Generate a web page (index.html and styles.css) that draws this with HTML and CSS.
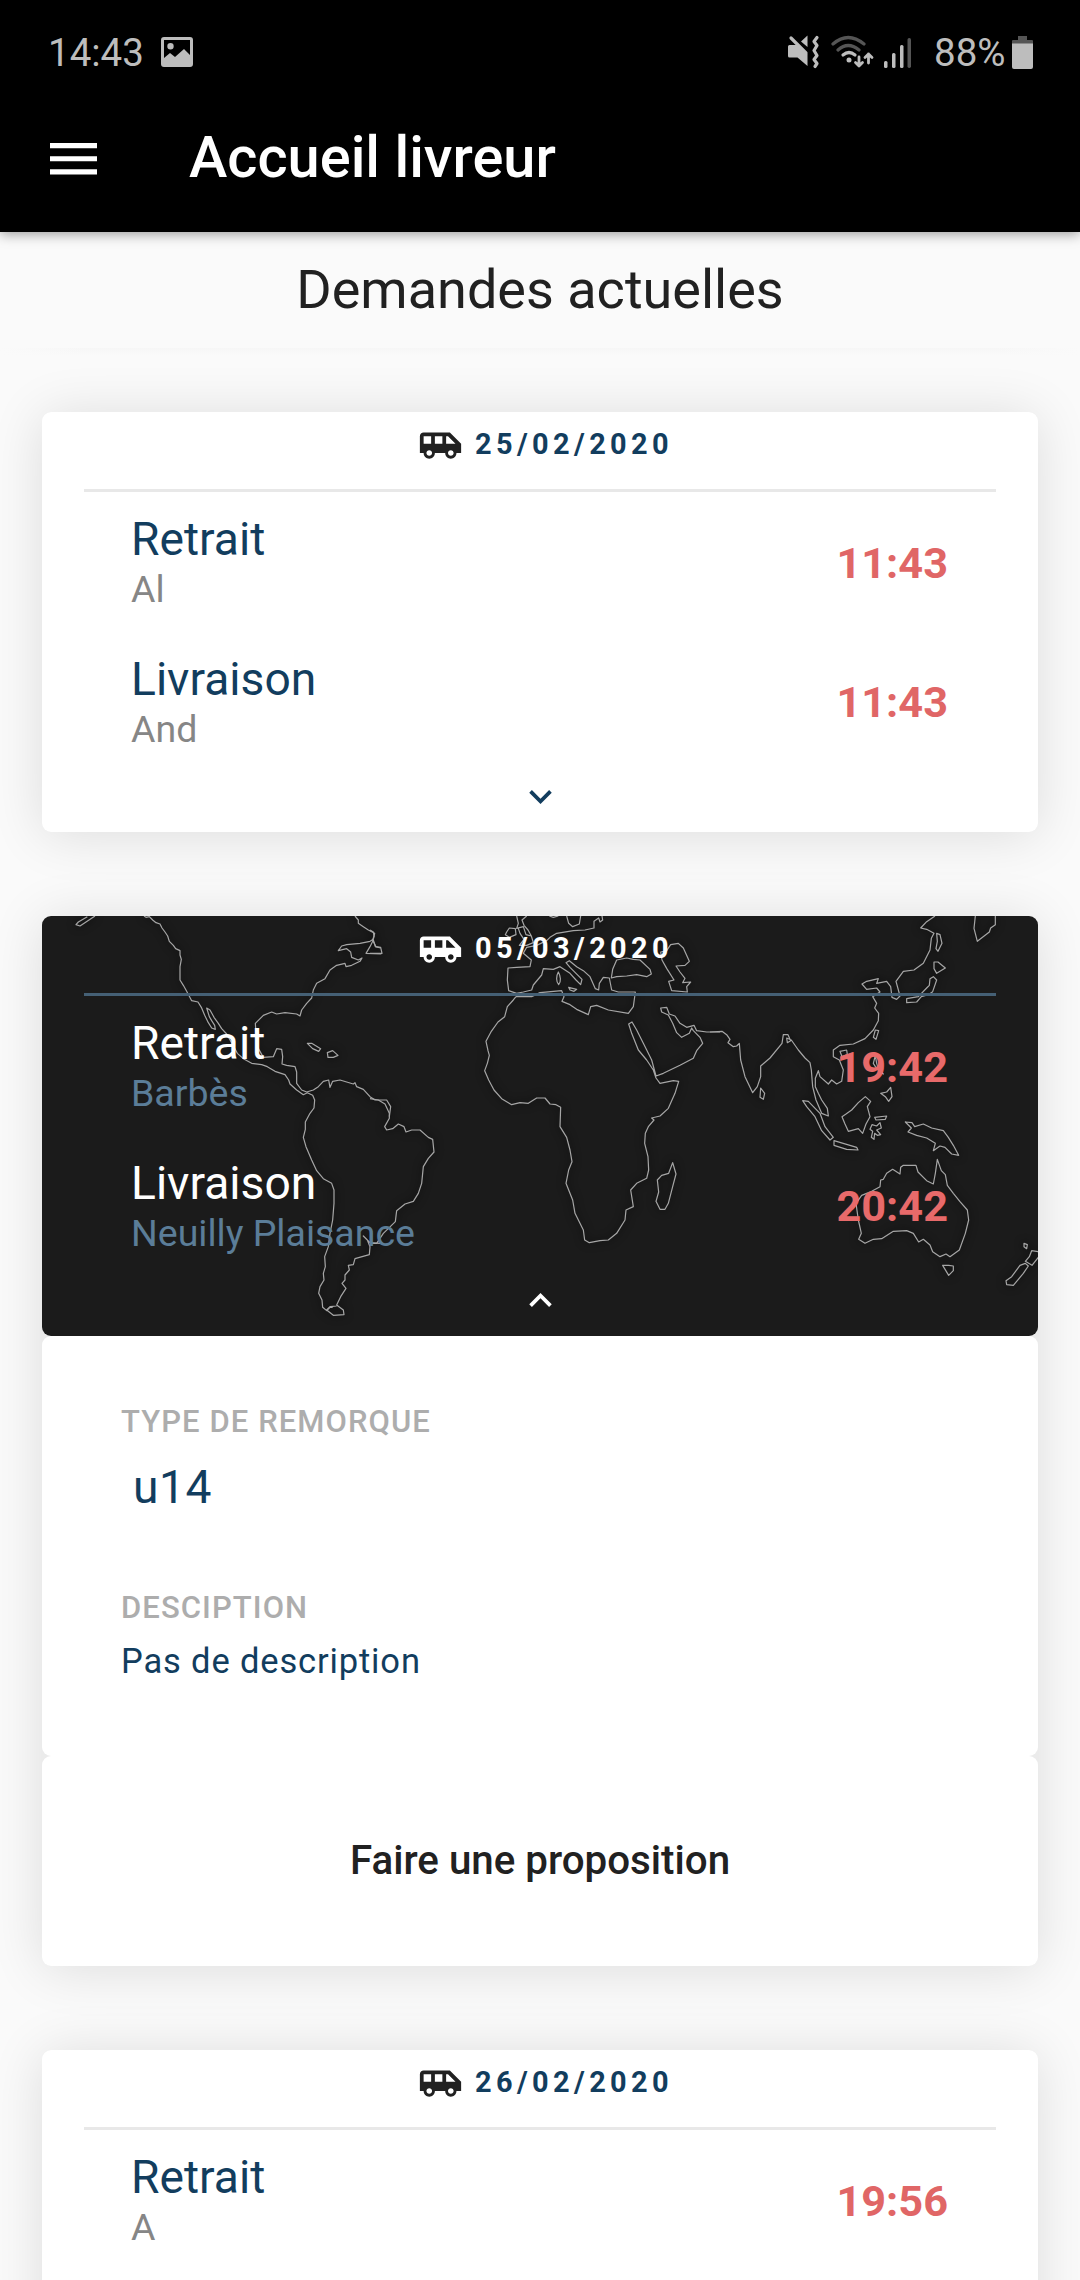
FILE: index.html
```html
<!DOCTYPE html>
<html lang="fr">
<head>
<meta charset="utf-8">
<title>Accueil livreur</title>
<link rel="stylesheet" href="styles.css">
</head>
<body>
<svg class="defs" aria-hidden="true">
  <symbol id="van" viewBox="0 0 24 24"><path d="M17 5H3c-1.1 0-2 .89-2 2v9h2c0 1.65 1.34 3 3 3s3-1.34 3-3h5.5c0 1.65 1.34 3 3 3s3-1.34 3-3H23v-5l-6-6zM3 11V7h4v4H3zm3 6.5c-.83 0-1.5-.67-1.5-1.5s.67-1.5 1.5-1.5 1.5.67 1.5 1.5-.67 1.5-1.5 1.5zm7-6.5H9V7h4v4zm4.5 6.5c-.83 0-1.5-.67-1.5-1.5s.67-1.5 1.5-1.5 1.5.67 1.5 1.5-.67 1.5-1.5 1.5zM15 11V7h1l4 4h-5z"/></symbol>
  <symbol id="more" viewBox="0 0 24 24"><path d="M16.59 8.59L12 13.17 7.41 8.59 6 10l6 6 6-6z"/></symbol>
  <symbol id="less" viewBox="0 0 24 24"><path d="M12 8l-6 6 1.41 1.41L12 10.83l4.59 4.58L18 14z"/></symbol>
</svg>
<header class="top">
  <div class="status">
    <span class="clock">14:43</span>
    <svg class="pic" viewBox="0 0 32 30"><path fill-rule="evenodd" d="M3 0h26a3 3 0 0 1 3 3v24a3 3 0 0 1-3 3H3a3 3 0 0 1-3-3V3a3 3 0 0 1 3-3zM3 3v18l6-5 5 4 9-8 6 6V3zM9.500 6a3.200 3.200 0 1 1 0 6.400a3.200 3.200 0 0 1 0-6.400z"/></svg>
    <svg class="signals" viewBox="0 0 126 34">
      <path d="M1.500 10H9l10.500 9v12L9.500 22.500h-8Q0 22.500 0 21v-9.500Q0 10 1.500 10zM13 6.500L19.500.5V12z"/>
      <path class="line" d="M3 3L18 18M29 2.500l-3 4 3 4-3 5 3 5-3 4 3 4-2 3"/>
      <g class="dim"><path class="line" d="M45 9q15-13 31 0M50 15q10-9 21 0"/><rect x="119.500" y="3" width="3.500" height="30" rx="1.700"/></g>
      <path class="line" d="M55 20q6-5 12 0"/><circle cx="61" cy="25" r="2.500"/>
      <path class="line thin" d="M71 22v9M67.500 27.500l3.500 3.500 3.500-3.500M80.500 28v-9M77 22.500l3.500-3.500 3.500 3.500"/>
      <rect x="96" y="26" width="3.500" height="7" rx="1.500"/><rect x="104" y="18" width="3.500" height="15" rx="1.500"/><rect x="112" y="10" width="3.500" height="23" rx="1.500"/>
    </svg>
    <span class="level">88%</span>
    <svg class="battery" viewBox="0 0 21 33"><path class="dim" d="M6 0h9v4h5q1 0 1 1v4H0V5q0-1 1-1h5z"/><path d="M0 7.500h21V31a2 2 0 0 1-2 2H2a2 2 0 0 1-2-2z"/></svg>
  </div>
  <div class="appbar">
    <svg class="menu" viewBox="3 6 18 12"><path d="M3 18h18v-2H3v2zm0-5h18v-2H3v2zm0-7v2h18V6H3z"/></svg>
    <h1>Accueil livreur</h1>
  </div>
</header>
<h2 class="heading">Demandes actuelles</h2>
<main class="list">
  <section class="request">
    <article class="card">
      <div class="date"><svg><use href="#van"/></svg><span>25/02/2020</span></div>
      <div class="stops">
        <div class="stop"><div><p class="kind">Retrait</p><p class="place">Al</p></div><time>11:43</time></div>
        <div class="stop"><div><p class="kind">Livraison</p><p class="place">And</p></div><time>11:43</time></div>
      </div>
      <svg class="chevron"><use href="#more"/></svg>
    </article>
  </section>
  <section class="request">
    <article class="card dark">
      <svg class="map" viewBox="0 0 996 420">
        <g transform="translate(-12 -16) scale(.33333)">
          <path d="M195 48L150 78 138 74 145 66 172 50"/>
          <path d="M342 48L348 52 358 50 368 60 378 68 390 72 396 84 405 96 413 108 418 124 430 136 437 146 450 152 450 165 454 178 450 200 450 240 460 256 470 274 485 302 504 306 514 322 524 346 535 368 545 384 556 388 554 376 545 362 538 350 530 324 540 330 552 352 565 370 575 386 590 402 606 430 622 460 640 476 665 490 695 494 712 500 735 514 765 524 776 540 780 552 800 570 820 584 832 578 848 586 854 600 852 624 840 640 826 666 826 688 820 712 828 740 845 780 860 812 880 836 905 850 912 870 912 910 908 960 900 1000 895 1040 884 1070 886 1100 880 1120 882 1140 870 1160 866 1180 876 1200 878 1222 890 1232 900 1222 908 1222"/>
          <path d="M975 48L985 60 985 70 1000 80 1015 90 1034 100 1030 118 1020 124 990 130 950 134 935 138 925 152 950 146 962 156 965 172 985 180 996 174 990 184 965 196 948 200 945 190 920 196 900 210 885 236 860 250 850 270 845 294 830 310 815 330 810 348 800 342 765 338 740 342 725 336 700 346 676 370 678 400 682 440 700 472 730 470 740 446 755 448 758 470 756 492 770 496 795 500 800 516 800 550 815 570 830 576 850 570 865 560 880 544 896 540 900 562 908 544 930 540 970 552 975 548 980 560 1000 568 1020 590 1035 600 1050 600 1070 600 1082 620 1078 650"/>
          <path d="M1030 120L1036 140 1052 144M1030 120L1020 140 1008 160 1054 162"/>
          <path d="M832 430L845 430 872 446 866 454 848 446ZM892 458L908 452 924 466 910 472 894 472Z"/>
          <path d="M1050 1030L1020 1028 1000 1008 1012 1020 1020 1040 1018 1064 975 1076 970 1094 955 1096 958 1110 945 1125 945 1140 936 1150 948 1165 932 1190 920 1215 940 1230 942 1244 910 1246 890 1230 900 1220 920 1218"/>
        </g>
        <g transform="translate(328 -16) scale(.33333)">
          <path d="M0 90L10 96 12 108 8 120 18 140 32 142 36 160 0 160"/>
          <path d="M0 596L25 600 45 612 58 640 58 655 44 680 50 690 68 686 85 672 102 680 108 696 125 690 150 690 175 712 188 718 192 756 175 775 160 800 155 850 145 880 130 904 105 912 80 932 76 965 40 1000 20 1030 0 1030"/>
          <path d="M438 290L430 300 412 320 404 350 384 366 364 394 348 424 354 452 358 466 352 490 344 512 356 540 372 570 395 596 425 614 450 608 475 610 500 594 525 594 540 612 558 614 572 622 570 680 590 712 600 750 606 785 596 810 588 850 608 900 615 940 640 990 644 1020 658 1028 690 1022 715 1020 740 1000 765 960 768 930 790 920 782 870 800 850 830 835 836 810 834 770 824 730 826 700 835 680 852 660 845 654 870 648 895 625 915 580 926 544 910 542 870 550 858 534 850 510 830 480 805 450 785 400 776 372 786 366 800 390 820 430 845 480 858 528 880 520 930 496 970 475 980 452 998 430 990 412 970 392 965 384 958 400 935 412 920 398 908 370 895 345 875 336 872 324 890 322 898 342 915 348 930 370 950 382 972 376 980 392 1010 396 1050 396"/>
          <path d="M438 290L485 290 510 278 575 272 582 290 576 304 600 314 620 328 655 344 662 320 680 316 715 330 775 340 790 320 796 276 770 276 745 276 725 270 718 234 700 232 688 250 686 270 676 266 660 230 640 212 620 200 598 182 588 188 600 202 636 238 632 254 618 240 600 220 570 200 550 208 520 206 515 225 490 255 485 270 460 276 440 280 416 272 412 240 414 204 440 202 480 200 484 180 460 160 470 142 500 136 530 122 540 112 560 100 610 92 645 90 672 84 672 64 686 54 690 66 698 60 696 48"/>
          <path d="M440 48L445 70 440 85 460 80 468 104 484 108 490 128 470 136 448 136 462 118 450 100 444 82M470 48L456 60 462 76 474 90 484 108M418 84L436 86 438 104 418 112 406 104 410 96ZM590 48L596 70 608 80 628 72 632 48M538 48L550 52 565 48"/>
          <path d="M565 216C558 228 558 245 566 254 574 245 572 228 565 216ZM596 262L620 268 612 274 600 270Z"/>
          <path d="M724 234L728 208 740 180 770 174 790 178 810 180 840 208 844 222 830 230 800 224 770 228 740 230ZM872 156L890 152 902 134 925 130 940 144 958 184 945 196 918 198 930 216 945 235 938 248 962 246 950 260 952 276 905 272 896 244 912 240 890 205 876 180Z"/>
          <path d="M908 788L918 822 908 860 895 910 885 928 870 928 858 904 866 876 862 840 875 826 896 820Z"/>
        </g>
        <g transform="translate(668 -16) scale(.33333)">
          <path d="M0 396L36 394 50 404 60 418 54 428 70 440 80 438 88 430 92 480 105 530 128 578 142 560 152 530 152 498 180 474 216 430 220 404 234 404 242 422 232 428 230 414 244 420 265 450 285 474 300 488 304 510 308 560 318 600 335 640 355 648 352 625 335 600 325 580 316 560 316 535 325 512 330 530 355 552 365 540 380 552 395 544 400 510 388 480 370 470 370 450 390 436 430 432 465 416 490 390 505 362 506 340 494 324 500 310 488 290 510 276 500 264 470 268 456 252 470 244 505 236 500 250 530 244 542 260 546 292 560 298 570 288 558 244 580 214 612 210 640 190 660 150 664 115 672 100 650 88 632 84 650 65 675 48"/>
          <path d="M152 564L164 580 160 598 150 592ZM278 602L295 604 330 640 345 680 370 712 360 720 335 692 315 650 290 620ZM372 722L440 742 444 750 410 748 372 736ZM396 650L408 642 425 630 445 608 466 590 482 604 472 620 480 650 468 672 458 700 445 686 415 694 405 672Z"/>
          <path d="M486 674L500 678 510 668 514 684 500 690 512 704 502 706 494 700 492 718 484 712 488 694 480 688ZM494 652L530 648 526 658 498 660ZM512 580L530 576 542 562 546 590 536 604 526 590ZM496 466L490 490 500 506 520 522 506 508 500 490ZM390 454L410 450 412 464 396 470ZM496 390L506 392 498 418 490 412Z"/>
          <path d="M586 666L606 668 614 680 640 672 665 684 700 692 715 712 730 736 746 766 725 762 705 742 690 738 670 752 676 730 650 714 620 706 594 696 604 684Z"/>
          <path d="M682 778L694 812 706 824 712 856 730 880 750 905 772 930 776 960 766 1000 748 1050 720 1070 708 1062 690 1070 668 1055 660 1035 640 1018 626 1026 610 1000 590 992 550 994 515 1016 490 1018 465 1030 446 1018 454 1000 445 960 438 910 455 886 485 874 510 860 512 840 520 838 530 820 548 808 570 822 572 802 580 796 618 796 624 816 650 842 670 852 676 820Z"/>
          <path d="M698 1096L716 1096 730 1098 730 1112 716 1126ZM942 1030L952 1034 950 1046 942 1040ZM990 1056L965 1052 958 1070 946 1084 966 1096 990 1066M946 1090L930 1096 905 1130 888 1142 890 1154 910 1156 940 1120 955 1098Z"/>
          <path d="M680 100L690 104 696 130 684 154 678 146 682 124ZM672 186L684 186 706 204 680 220 672 206ZM670 230L680 240 668 275 655 284 634 290 620 306 590 308 590 296 625 290 650 264 658 256 660 236ZM796 48L792 85 802 124 838 96 842 84 856 74 856 48"/>
        </g>
      </svg>
      <div class="date"><svg><use href="#van"/></svg><span>05/03/2020</span></div>
      <div class="stops">
        <div class="stop"><div><p class="kind">Retrait</p><p class="place">Barbès</p></div><time>19:42</time></div>
        <div class="stop"><div><p class="kind">Livraison</p><p class="place">Neuilly Plaisance</p></div><time>20:42</time></div>
      </div>
      <svg class="chevron"><use href="#less"/></svg>
    </article>
    <div class="card details">
      <p class="label">TYPE DE REMORQUE</p>
      <p class="trailer">u14</p>
      <p class="label">DESCIPTION</p>
      <p class="description">Pas de description</p>
    </div>
    <div class="card action">Faire une proposition</div>
  </section>
  <section class="request">
    <article class="card">
      <div class="date"><svg><use href="#van"/></svg><span>26/02/2020</span></div>
      <div class="stops">
        <div class="stop"><div><p class="kind">Retrait</p><p class="place">A</p></div><time>19:56</time></div>
      </div>
    </article>
  </section>
</main>
</body>
</html>
```
FILE: styles.css
```css
* { box-sizing: border-box; }
body {
  margin: 0;
  height: 2280px;
  display: flex;
  flex-direction: column;
  overflow: hidden;
  background: #fafafa;
  color: #212121;
  font-family: Roboto, "Liberation Sans", sans-serif;
}
h1, h2, p { margin: 0; font-weight: 400; }
svg { display: block; flex: none; fill: currentColor; }
.defs { position: absolute; width: 0; height: 0; }

.top {
  flex: none;
  height: 232px;
  background: #000;
  box-shadow: 0 2px 12px rgba(0, 0, 0, .4);
}
.status {
  height: 104px;
  display: flex;
  align-items: center;
  padding: 0 47px 0 48px;
  color: #bdbdbd;
  font-size: 38.500px;
  line-height: 44px;
}
.status .dim { color: #555; fill: #555; }
.status .line { fill: none; stroke: currentColor; stroke-width: 3.2; stroke-linecap: round; stroke-linejoin: round; }
.status .thin { stroke-width: 2.8; }
.clock { width: 113px; padding-top: 2px; }
.pic { width: 32px; height: 30px; }
.signals { width: 126px; height: 34px; margin-left: auto; }
.level { width: 98px; padding: 2px 0 0 20px; }
.battery { width: 21px; height: 33px; }
.appbar {
  height: 128px;
  display: flex;
  align-items: flex-start;
  padding-left: 50px;
  color: #fff;
}
.menu { width: 47px; height: 31.500px; margin-top: 39px; }
h1 { margin: 21px 0 0 92px; font-size: 57.750px; font-weight: 500; line-height: 64px; }

.heading {
  flex: none;
  height: 116px;
  font-size: 54px;
  line-height: 116px;
  text-align: center;
}
.list {
  flex: 1;
  min-height: 0;
  display: flex;
  flex-direction: column;
  gap: 84px;
  padding: 64px 42px 0;
  overflow: hidden;
  background: linear-gradient(90deg, #fafafa, transparent 8% 92%, #fafafa), linear-gradient(#f6f6f6, #fafafa 8px);
}
.request {
  flex: none;
  border-radius: 9px;
  background: #ebebeb;
  box-shadow: 0 3px 53px rgba(0, 0, 0, .12);
}
.card {
  position: relative;
  height: 420px;
  border-radius: 9px;
  background: #fff;
  overflow: hidden;
}
.date {
  position: relative;
  height: 80px;
  margin: 0 42px;
  padding: 11px 0 0 334px;
  display: flex;
  gap: 12px;
  border-bottom: 3px solid #e8e8e8;
}
.date svg { width: 45px; height: 45px; }
.date span {
  color: #123d5e;
  font-size: 28.900px;
  font-weight: 700;
  line-height: 43px;
  letter-spacing: 4.400px;
}
.stops {
  position: relative;
  display: flex;
  flex-direction: column;
  gap: 38px;
  padding: 20px 90px 0 89px;
}
.stop { display: flex; align-items: center; justify-content: space-between; }
.kind { color: #123d5e; font-size: 46.200px; line-height: 54px; }
.place { color: #868686; font-size: 37.500px; line-height: 47.500px; }
time { padding-top: 2px; color: #e06666; font-size: 43.300px; font-weight: 700; line-height: 54px; }
.chevron { position: relative; width: 45px; height: 45px; margin: 21px auto 0; color: #123d5e; }

.dark { background: #1b1b1b; color: #fff; }
.map {
  position: absolute;
  inset: 0;
  width: 996px;
  height: 420px;
  fill: none;
  stroke: #a6a6a6;
  stroke-width: 3.600;
  stroke-linejoin: round;
  filter: drop-shadow(0 0 4px #000);
}
.dark .date { border-color: #456075; }
.dark .date span, .dark .kind, .dark .chevron { color: #fff; }
.dark .place { color: #5b7d98; }
.dark time { color: #e86a6a; }

.details { padding: 65px 79px 0; }
.label { color: #adadad; font-size: 31px; font-weight: 500; line-height: 42px; letter-spacing: 1.080px; }
.trailer { padding-left: 12px; color: #123d5e; font-size: 46.200px; line-height: 89px; margin-bottom: 55px; letter-spacing: .5px; }
.description { color: #123d5e; font-size: 34.500px; line-height: 64px; letter-spacing: .850px; }
.action {
  height: 210px;
  padding-bottom: 2px;
  display: flex;
  align-items: center;
  justify-content: center;
  font-size: 40.300px;
  font-weight: 500;
}
```
